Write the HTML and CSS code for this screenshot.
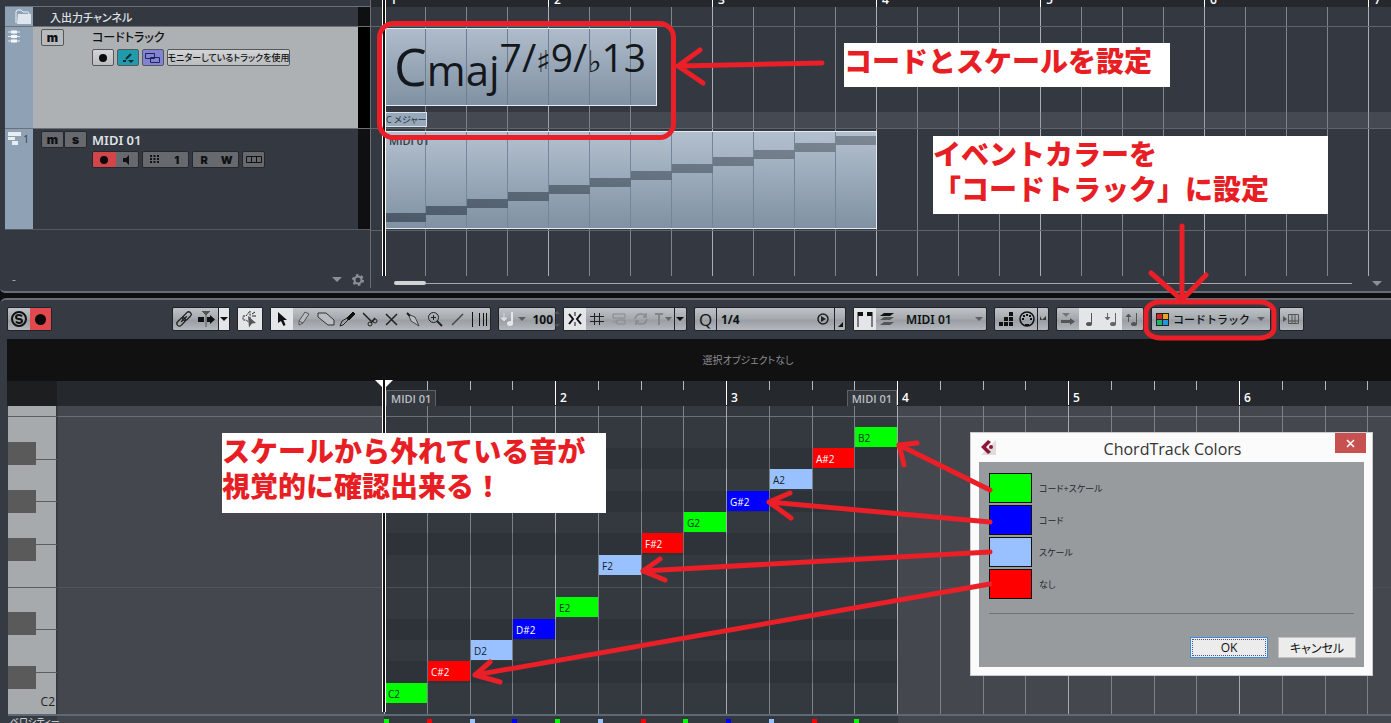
FILE: index.html
```html
<!DOCTYPE html>
<html lang="ja">
<head>
    <meta charset="UTF-8">
    <meta name="viewport" content="width=device-width, initial-scale=1.0">
    <title>ChordTrack Colors</title>
    <link rel="stylesheet" href="styles.css">
</head>
<body>
<div class="app">

    <!-- project window -->
    <section class="project">
        <div class="tracks">
            <div class="track folder">
                <div class="strip"><svg width="18" height="16" viewBox="0 0 18 16"><path d="M2 14V3q0-2 2-2h3l2 2h5q1 0 1 2" fill="none" stroke="#eef2f6"/><path d="M3 15L4 5h13v10z" fill="#dfe5ec"/></svg></div>
                <h2 class="name">入出力チャンネル</h2>
                <div class="meter"></div>
            </div>
            <div class="track chord">
                <div class="strip"><svg width="12" height="13" viewBox="0 0 12 13"><path d="M0 2h12M0 6.500h12M0 11h12" stroke="#e4e9ef"/><path d="M6 0v13" stroke="#b8c3cf"/><path d="M3 2h6M3 6.500h6M3 11h6" stroke="#f4f7fa" stroke-width="3"/></svg></div>
                <div class="ms"><button class="lt">m</button></div>
                <div class="body">
                    <h2 class="name">コードトラック</h2>
                    <div class="ctl">
                        <button class="lt" aria-label="rec"><i class="dot"></i></button>
                        <button class="lt teal" aria-label="chord"><svg width="14" height="12" viewBox="0 0 14 12"><path d="M2 9h3M5 7l5-5" stroke="#062a30" stroke-width="2"/><path d="M7 8h6l-3 3z" fill="#062a30"/></svg></button>
                        <button class="lt violet" aria-label="lanes"><svg width="16" height="10" viewBox="0 0 16 10"><path d="M.5.5h9v5h-9zM5.500 4.500h9v5h-9z" fill="none" stroke="#22235c"/></svg></button>
                        <button class="lt monitor">モニターしているトラックを使用</button>
                    </div>
                </div>
                <div class="meter"></div>
            </div>
            <div class="track midi">
                <div class="strip"><svg width="14" height="14" viewBox="0 0 14 14"><path d="M0 0h13v4H0zM0 5h7v3H0zM4 9h6v4H4z" fill="#e8edf2"/></svg><span>1</span></div>
                <div class="ms"><button>m</button><button>s</button></div>
                <div class="body">
                    <h2 class="name">MIDI 01</h2>
                    <div class="ctl">
                        <div class="pair"><button class="red" aria-label="rec"><i class="dot"></i></button><button aria-label="monitor"><svg width="8" height="10" viewBox="0 0 8 10"><path d="M0 3h3l3-3v10L3 7H0z" fill="#111"/></svg></button></div>
                        <div class="pair"><button aria-label="channel"><svg width="9" height="9" viewBox="0 0 9 9"><path d="M1 0v9M4.500 0v9M8 0v9" stroke="#111" stroke-width="2" stroke-dasharray="2 1"/></svg></button><button>1</button></div>
                        <div class="pair"><button>R</button><button>W</button></div>
                        <button aria-label="lanes"><svg width="16" height="8" viewBox="0 0 16 8"><path d="M.5.5h15v6h-15zM5.500 0v7M10.500 0v7" fill="none" stroke="#111"/></svg></button>
                    </div>
                </div>
                <div class="meter"></div>
            </div>
            <div class="foot">
                <span class="dash">-</span>
                <i class="tri"></i>
                <svg width="12" height="12" viewBox="0 0 12 12"><circle cx="6" cy="6" r="3.500" fill="none" stroke="#8b9098" stroke-width="2"/><circle cx="6" cy="6" r="5" fill="none" stroke="#8b9098" stroke-width="2" stroke-dasharray="2.600 2.600"/></svg>
            </div>
        </div>

        <div class="arrange">
            <div class="bar-nums"><span>1</span><span>2</span><span>3</span><span>4</span><span>5</span><span>6</span><span>7</span></div>
            <div class="lanes">
                <div class="lane top"></div>
                <div class="lane chords">
                    <div class="chord-event">C<small>maj</small><sup>7/<b>♯</b>9/<b>♭</b>13</sup></div>
                    <div class="scale-lane"><span>C メジャー</span></div>
                </div>
                <div class="lane part-lane">
                    <div class="midi-part">
                        <span>MIDI 01</span>
                        <svg width="490" height="96" viewBox="0 0 490 96">
                            <defs><linearGradient id="ev" x1="0" x2="1" y1="1" y2="0"><stop offset="0" stop-color="#4a5968"/><stop offset="1" stop-color="#7c8793"/></linearGradient></defs>
                            <path fill="url(#ev)" d="M0 81h40v9H0zM40 74h41v9H40zM81 67h41v9H81zM122 60h41v9h-41zM163 53h41v9h-41zM204 46h41v9h-41zM245 39h41v9h-41zM286 32h41v9h-41zM327 25h41v9h-41zM368 18h41v9h-41zM409 11h41v9h-41zM450 4h40v9h-40z"/>
                        </svg>
                    </div>
                </div>
                <div class="lane rest"></div>
            </div>
            <div class="scroll"><i class="thumb"></i><i class="rail"></i><i class="tri"></i></div>
            <i class="cursor"></i>
        </div>
    </section>

    <!-- key editor -->
    <section class="editor">
        <div class="toolbar">
            <div class="grp solo">
                <button aria-label="solo"><svg width="18" height="18" viewBox="0 0 18 18"><circle cx="9" cy="9" r="7" fill="none" stroke="#111" stroke-width="2"/><path d="M12 6.500q-1-1.500-3-1.500-3 0-3 2t3 2 3 2-3 2q-2 0-3-1.500" fill="none" stroke="#111" stroke-width="2"/></svg></button>
                <button class="red" aria-label="record"><i class="dot big"></i></button>
            </div>
            <div class="grp">
                <button aria-label="link"><svg width="18" height="18" viewBox="0 0 18 18" fill="none" stroke="#222" stroke-width="1.300"><g transform="rotate(-45 9 9)"><rect x="0" y="6.500" width="10" height="5" rx="2.500"/><rect x="8" y="6.500" width="10" height="5" rx="2.500"/><path d="M5 9h8"/></g></svg></button>
                <button class="follow" aria-label="autoscroll"><svg width="18" height="16" viewBox="0 0 18 16"><path d="M0 6h6v5H0zM9 6h3V4l5 4.500-5 4.500v-2H9z" fill="#111"/><path d="M8 3v13M4 0h8L8 4z" stroke="#555" fill="#555"/></svg></button>
                <button class="thin on" aria-label="menu"><i class="tri k"></i></button>
            </div>
            <div class="grp">
                <button class="on wide" aria-label="feedback"><svg width="16" height="18" viewBox="0 0 16 18"><path d="M1 6h3l4-5v12L4 10H1z" fill="none" stroke="#222" stroke-dasharray="2 1"/><path d="M10 4l3-2M10 6h4" stroke="#222"/><path d="M6 6l8 7-4 .5-3 4z" fill="#555"/></svg></button>
            </div>
            <div class="grp tools">
                <button class="on" aria-label="select"><svg width="12" height="16" viewBox="0 0 12 16"><path d="M2 1v11l3-2 2.500 5 2-1L7.500 9H11z" fill="#111"/></svg></button>
                <button aria-label="draw"><svg width="12" height="16" viewBox="0 0 12 16"><path d="M1 14V10L7 1l4 2-6 9zM1 10l4 2" fill="#b9bcc0" stroke="#555"/></svg></button>
                <button aria-label="erase"><svg width="18" height="14" viewBox="0 0 18 14"><path d="M1 1h8l8 7v5h-6L1 5z" fill="#b9bcc0" stroke="#333"/></svg></button>
                <button aria-label="trim"><svg width="17" height="16" viewBox="0 0 17 16"><path d="M1 15l2-5 5-3 1 2-5 5z" fill="none" stroke="#222"/><path d="M8 7l6-6 2 2-6 6z" fill="#111" stroke="#111"/></svg></button>
                <button aria-label="split"><svg width="16" height="15" viewBox="0 0 16 15" fill="none" stroke="#222"><path d="M1 1l9 9M9 11l4-5" stroke-width="1.500"/><circle cx="8" cy="12" r="2"/><circle cx="13" cy="9" r="2"/></svg></button>
                <button aria-label="mute"><svg width="13" height="13" viewBox="0 0 13 13"><path d="M1 1l11 11M12 1L1 12" stroke="#222" stroke-width="1.500"/></svg></button>
                <button aria-label="glue"><svg width="14" height="15" viewBox="0 0 14 15"><path d="M1 1l3 2 5 2 4 9-8-5-2-5z" fill="#b9bcc0" stroke="#444"/><path d="M1 1l3 3" stroke="#222" stroke-width="2"/></svg></button>
                <button aria-label="zoom"><svg width="16" height="16" viewBox="0 0 16 16" fill="none" stroke="#222"><circle cx="6.500" cy="6.500" r="5"/><path d="M4 6.500h5M6.500 4v5"/><path d="M10 10l5 5" stroke-width="2"/></svg></button>
                <button aria-label="line"><svg width="13" height="13" viewBox="0 0 13 13"><path d="M1 12L12 1" stroke="#444" stroke-width="1.500"/></svg></button>
                <button aria-label="warp"><svg width="17" height="15" viewBox="0 0 17 15"><path d="M1.500 0v15M8.500 1v13M12.500 1v13M15.500 1v13" stroke="#111"/></svg></button>
            </div>
            <div class="grp vel">
                <svg width="15" height="16" viewBox="0 0 15 16"><path d="M4 2v6M1 7h6L4 10z" fill="#d9dde1" stroke="#d9dde1"/><path d="M12 1v11" stroke="#e3e6ea" stroke-width="2"/><ellipse cx="10" cy="12.500" rx="3" ry="2.500" fill="#e3e6ea"/></svg>
                <i class="tri g"></i>
                <label class="hid" for="vel">ベロシティー</label><input id="vel" type="text" value="100">
                <svg width="6" height="16" viewBox="0 0 6 16"><path d="M0 3l3-3 3 3zM0 13l3 3 3-3z" fill="#555"/></svg>
            </div>
            <div class="grp snap">
                <button class="on" aria-label="snap"><svg width="14" height="14" viewBox="0 0 14 14" fill="none" stroke="#111"><path d="M1 2l4 5-4 5M13 2L9 7l4 5" stroke-width="2"/><path d="M7 0v4M7 10v4"/></svg></button>
                <button aria-label="grid"><svg width="14" height="12" viewBox="0 0 14 12"><path d="M4.500 0v12M9.500 0v12M0 3.500h14M0 8.500h14" stroke="#222"/></svg></button>
                <button aria-label="relative"><svg width="14" height="12" viewBox="0 0 14 12"><path d="M1 1h12v4H1zM5 7h8v4H5zM1 9h4" fill="none" stroke="#868b90"/></svg></button>
                <button aria-label="cycle"><svg width="14" height="12" viewBox="0 0 14 12"><path d="M1 6q1-5 6-5 3 0 5 2M13 6q-1 5-6 5-3 0-5-2M12 0v4H9M2 12V8h3" fill="none" stroke="#868b90" stroke-width="1.500"/></svg></button>
                <button aria-label="snap type"><svg width="18" height="12" viewBox="0 0 18 12"><path d="M1 1h8M5 1v11" stroke="#82878c" stroke-width="2"/><path d="M11 4h7l-3.500 4z" fill="#666"/></svg></button>
                <button class="thin" aria-label="menu"><i class="tri k"></i></button>
            </div>
            <div class="grp quant">
                <button class="q">Q</button>
                <label class="hid" for="quant">クオンタイズ</label>
                <select id="quant"><option>1/4</option></select>
                <svg width="14" height="14" viewBox="0 0 14 14"><circle cx="7" cy="7" r="5" fill="none" stroke="#222" stroke-width="1.500"/><path d="M5 4l5 3-5 3z" fill="#222"/></svg>
                <button class="thin end" aria-label="panel"><svg width="5" height="5" viewBox="0 0 5 5"><path d="M5 0v5H0z" fill="#111"/></svg></button>
            </div>
            <div class="grp part">
                <button class="on" aria-label="parts"><svg width="16" height="15" viewBox="0 0 16 15"><path d="M1 0v15M15 0v15" stroke="#111"/><path d="M1 0h5v4H1zM10 0h5v4h-5z" fill="#111"/></svg></button>
                <svg width="14" height="14" viewBox="0 0 14 14"><path d="M4 1h10l-4 3H0z" fill="#111"/><path d="M4 5h10l-4 3H0zM4 10h10l-4 3H0z" fill="#555"/></svg>
                <label class="hid" for="part">パート</label>
                <select id="part"><option>MIDI 01</option></select>
                <i class="tri g"></i>
            </div>
            <div class="grp step">
                <button aria-label="step input"><svg width="14" height="14" viewBox="0 0 14 14"><path d="M0 10h4v4H0zM5 10h4v4H5zM10 10h4v4h-4zM5 5h4v4H5zM10 5h4v4h-4zM10 0h4v4h-4z" fill="#111"/></svg></button>
                <button aria-label="midi input"><svg width="16" height="16" viewBox="0 0 16 16"><circle cx="8" cy="8" r="7" fill="none" stroke="#111" stroke-width="1.500"/><path d="M3 8h2M11 8h2M4 5h2M10 5h2M7 4h2M6 14h4" stroke="#111" stroke-width="2"/></svg></button>
                <button class="thin" aria-label="more"><svg width="6" height="6" viewBox="0 0 6 6"><path d="M0 0v4h2zM6 0L2 4h4z" fill="#333"/></svg></button>
            </div>
            <div class="grp edit">
                <button aria-label="move"><svg width="16" height="14" viewBox="0 0 16 14"><path d="M2 1h8L6 5z" fill="#777"/><path d="M1 8h9V6l5 3.500-5 3.500v-2H1z" fill="#555"/></svg></button>
                <button class="on" aria-label="pitch"><svg width="8" height="15" viewBox="0 0 8 15"><path d="M6.500 1v11" stroke="#555"/><ellipse cx="4" cy="12" rx="3" ry="2" fill="#555"/></svg></button>
                <button class="on" aria-label="down"><svg width="14" height="15" viewBox="0 0 14 15"><path d="M11.500 1v11M3.500 1v6M1 5l2.500 3L6 5" stroke="#666" fill="#666"/><ellipse cx="9" cy="12" rx="3" ry="2" fill="#666"/></svg></button>
                <button aria-label="up"><svg width="14" height="15" viewBox="0 0 14 15"><path d="M11.500 1v11M3.500 10V4M1 5l2.500-3L6 5" stroke="#555" fill="#555"/><ellipse cx="9" cy="12" rx="3" ry="2" fill="#555"/></svg></button>
            </div>
            <div class="grp color">
                <svg width="13" height="13" viewBox="0 0 13 13"><path d="M0 0h13v13H0z" fill="#222"/><path d="M1 1h5v5H1z" fill="#d8232a"/><path d="M7 1h5v5H7z" fill="#e8a21c"/><path d="M1 7h5v5H1z" fill="#18b56a"/><path d="M7 7h5v5H7z" fill="#2196e8"/></svg>
                <label class="hid" for="color">イベントカラー</label>
                <select id="color"><option>コードトラック</option></select>
                <i class="tri g"></i>
            </div>
            <div class="grp last">
                <button aria-label="keys"><svg width="16" height="10" viewBox="0 0 16 10"><path d="M0 2l4 3-4 3z" fill="#555"/><path d="M5.500.5h10v9h-10zM9 0v10M12 0v10M5 7h11" fill="none" stroke="#555"/></svg></button>
            </div>
        </div>

        <div class="info">選択オブジェクトなし</div>

        <div class="ruler">
            <div class="corner"></div>
            <div class="pre"></div>
            <div class="bars">
                <div class="bar"><span class="tag">MIDI 01</span></div>
                <div class="bar"><span>2</span></div>
                <div class="bar"><span>3</span><span class="tag end">MIDI 01</span></div>
                <div class="bar"><span>4</span></div>
                <div class="bar"><span>5</span></div>
                <div class="bar"><span>6</span></div>
            </div>
        </div>

        <div class="roll">
            <div class="keys">
                <svg width="49" height="308" viewBox="0 0 49 308">
                    <path d="M0 10.500h49M28 53.500h21M28 95.500h21M28 138.500h21M0 181.500h49M28 223.500h21M28 266.500h21" stroke="#5b5e61"/>
                    <path d="M0 36h28v23H0zM0 84h28v23H0zM0 132h28v23H0zM0 206h28v23H0zM0 260h28v23H0z" fill="#5a5a5a"/>
                </svg>
                <span>C2</span>
            </div>
            <div class="pre"></div>
            <div class="grid">
                <div class="notes">
                    <i class="dark r2"></i><i class="dark r4"></i><i class="dark r6"></i><i class="dark r10"></i><i class="dark r12"></i>
                    <span class="note both r13 c1">C2</span>
                    <span class="note none r12 c2">C#2</span>
                    <span class="note scale r11 c3">D2</span>
                    <span class="note chd r10 c4">D#2</span>
                    <span class="note both r9 c5">E2</span>
                    <span class="note scale r7 c6">F2</span>
                    <span class="note none r6 c7">F#2</span>
                    <span class="note both r5 c8">G2</span>
                    <span class="note chd r4 c9">G#2</span>
                    <span class="note scale r3 c10">A2</span>
                    <span class="note none r2 c11">A#2</span>
                    <span class="note both r1 c12">B2</span>
                </div>
            </div>
        </div>

        <div class="velocity">
            <span class="vlabel">ベロシティー</span>
            <div class="vbars">
                <i class="both"></i><i class="none"></i><i class="scale"></i><i class="chd"></i><i class="both"></i><i class="scale"></i><i class="none"></i><i class="both"></i><i class="chd"></i><i class="scale"></i><i class="none"></i><i class="both"></i>
            </div>
        </div>

        <svg class="flag" width="18" height="8" viewBox="0 0 18 8"><path d="M0 0h8v8zM10 0h8l-8 8z" fill="#fff"/></svg>
        <i class="cursor low"></i>
    </section>

    <!-- colour dialog -->
    <div class="dialog" role="dialog" aria-labelledby="dlg">
        <header>
            <svg width="15" height="15" viewBox="0 0 15 15"><path d="M0 15L15 0v15z" fill="#e0dcdc"/><path d="M7 0l3 2-5 5 5 5-3 2-7-7z" fill="#8e1638"/><circle cx="10" cy="7" r="2" fill="#8e1638"/></svg>
            <h1 id="dlg">ChordTrack Colors</h1>
            <button class="close" aria-label="close"><svg width="9" height="9" viewBox="0 0 9 9"><path d="M1 1l7 7M8 1L1 8" stroke="#fff" stroke-width="1.500"/></svg></button>
        </header>
        <div class="content">
            <ul>
                <li><button id="k1" class="both"></button><label for="k1">コード+スケール</label></li>
                <li><button id="k2" class="chd"></button><label for="k2">コード</label></li>
                <li><button id="k3" class="scale"></button><label for="k3">スケール</label></li>
                <li><button id="k4" class="none"></button><label for="k4">なし</label></li>
            </ul>
            <hr>
            <div class="actions"><button class="ok">OK</button><button>キャンセル</button></div>
        </div>
    </div>

    <!-- notes drawn over the windows -->
    <p class="memo m1">コードとスケールを設定</p>
    <p class="memo m2">イベントカラーを<br>「コードトラック」に設定</p>
    <p class="memo m3">スケールから外れている音が<br>視覚的に確認出来る！</p>
    <svg class="marks" width="1391" height="723" viewBox="0 0 1391 723">
        <rect x="379.500" y="23.500" width="294" height="114" rx="14"/>
        <rect x="1146" y="302" width="128" height="36" rx="14" ry="10"/>
        <path d="M822 63L678 66M700 50L678 66L703 83"/>
        <path d="M1182 226V299M1151 273L1182 300L1206 275"/>
        <path d="M990 490L899 445M917 443L899 445L904 465"/>
        <path d="M990 522L769 502M790 493L769 502L791 518"/>
        <path d="M990 552L643 571M660 559L643 571L665 580"/>
        <path d="M990 584L475 675M490 662L475 675L500 682"/>
    </svg>
</div>
</body>
</html>
```

FILE: styles.css
```css
*{ box-sizing: border-box;}
body{ margin: 0; background: #0d0e11; font-family: "Open Sans", "Noto Sans CJK JP", sans-serif; font-size: 12px; overflow: hidden;}
h1,h2,p,ul{ margin: 0; padding: 0; font-weight: normal; list-style: none;}
button,select,input{ margin: 0; padding: 0; border: 0; border-radius: 0; background: none; font: inherit; color: #111; appearance: none;}
button{ display: flex; align-items: center; justify-content: center;}
svg{ display: block; flex: none;}
:lang(ja){ font-feature-settings: "palt";}
.hid{ position: absolute; width: 1px; height: 1px; overflow: hidden; clip-path: inset(50%);}
.app{ position: relative; display: flex; flex-direction: column; gap: 5px; min-height: 100vh;}

.tri{ width: 0; height: 0; border: 5px solid transparent; border-top-color: #8b9098; border-bottom: 0;}
.tri.k{ border-width: 4px 4px 0; border-top-color: #111;}
.tri.g{ border-width: 4px 4px 0; border-top-color: #5c6065;}
.dot{ width: 8px; height: 8px; border-radius: 50%; background: #0b0b0b;}
.dot.big{ width: 11px; height: 11px;}
.both{ background: #00ff00; color: #032;}
.chd{ background: #0000ff; color: #fff;}
.scale{ background: #99c1ff; color: #123;}
.none{ background: #ff0000; color: #fff;}

/* project window */
.project{ display: flex; height: 293px; background: #343840; border-bottom: 2px solid #696d72; border-radius: 0 0 0 5px;}
.tracks{ flex: none; width: 371px; height: 288px; padding: 6px 0 0 5px; border-right: 1px solid #6a6e74; display: flex; flex-direction: column;}
.track{ display: flex; border-top: 1px solid #6c7178;}
.strip{ flex: none; width: 28px; background: #8fa1b4; display: flex; justify-content: space-between; align-items: flex-start; padding: 3px 4px 0 3px; font-size: 10px; line-height: 14px; color: #333b44;}
.name{ font-size: 13px; line-height: 18px; color: #dfe2e5;}
.meter{ width: 12px; margin-left: auto; background: #0f1011;}
.folder{ height: 20px;}
.folder .strip{ padding: 2px 0 0 9px;}
.folder .name{ padding: 2px 0 0 17px; font-size: 11px; font-weight: 500;}
.chord{ height: 102px;}
.chord > .body, .chord > .ms{ background: #adb1b3;}
.chord .name{ color: #111; font-size: 12px; font-weight: 500;}
.chord .meter{ background: #000;}
.midi{ height: 102px; border-bottom: 1px solid #555a60;}
.midi .name{ font-family: "Noto Sans", sans-serif; font-size: 13px; font-weight: 600;}
.ms{ width: 58px; padding: 2px 0 0 8px; display: flex; align-items: flex-start;}
.body{ flex: 1; padding: 2px 0 0 1px;}
.ms button, .ctl button{ width: 23px; height: 17px; border: 1px solid #26282b; border-radius: 2px; background: #666a6f; font: 900 12px/12px "Inter", sans-serif;}
.ms button.lt{ background: #b8bbbd; border-color: #55585b;}
.ctl{ display: flex; gap: 3px; margin-top: 2px;}
.ctl button.lt{ width: 22px; background: linear-gradient(#d2d4d6,#babdbf); border-color: #55585b;}
.ctl button.teal{ background: #219bab;}
.ctl button.violet{ background: #8084d2;}
.ctl button.monitor{ width: 123px; font: 500 9px/14px "Noto Sans CJK JP", sans-serif; font-feature-settings: "palt"; white-space: nowrap;}
.pair{ display: flex; width: 47px; height: 17px; border: 1px solid #26282b; border-radius: 2px; background: #666a6f;}
.pair button{ flex: 1; height: 15px; border: 0; background: none; font-size: 11px;}
.ctl .pair .red{ background: #d4454b;}
.foot{ display: flex; align-items: center; gap: 10px; margin-top: auto; padding: 0 6px 0 7px; color: #a5a9ae;}
.dash{ margin-right: auto;}

.arrange{ position: relative; flex: 1; min-width: 0; padding-left: 13px; overflow: hidden;}
.bar-nums{ display: flex; height: 7px; margin-left: -13px; padding-left: 13px; background: #25282d; overflow: hidden;}
.bar-nums span{ flex: none; width: 164px; height: 7px; border-left: 1px solid #fff; padding-left: 5px; color: #fff; font-size: 12px; font-weight: 600; line-height: 14px; display: flex; align-items: flex-end;}
.lanes{ height: 269px; background-image: linear-gradient(to right, #a9adb1 1px, transparent 1px), linear-gradient(to right, #80858a 1px, transparent 1px); background-size: 164px 100%, 41px 100%;}
.lane{ border-bottom: 1px solid #5f6469; margin-left: -13px; padding-left: 14px;}
.top{ height: 20px;}
.chords{ height: 102px; padding-top: 1px;}
.chord-event{ display: flow-root; width: 272px; height: 78px; padding-left: 8px; border: 1px solid #e4ebf2; font: 52px/74px "Open Sans", "Noto Sans CJK JP", sans-serif; color: #14181c; white-space: nowrap;
    background: repeating-linear-gradient(to right, transparent 0, transparent 39px, #6d7e90 39px, #6d7e90 40px, transparent 40px, transparent 41px), linear-gradient(#afbccb,#8091a3);}
.chord-event small{ font-size: 42px;}
.chord-event sup{ font-size: 39px; line-height: 0; vertical-align: 14px;}
.chord-event b{ font: 30px/0 "DejaVu Sans", sans-serif;}
.scale-lane{ height: 16px; margin: 6px 0 0 -1px; padding-left: 1px; background: rgba(120,125,130,.25);}
.scale-lane span{ display: block; width: 42px; height: 15px; border: 1px solid #d5e2ee; background: #97a8bb; font-size: 9px; line-height: 13px; color: #2b323a; white-space: nowrap;}
.part-lane{ height: 102px; padding-top: 2px;}
.midi-part{ display: grid; width: 492px; height: 98px; border: 1px solid #e4ebf2;
    background: repeating-linear-gradient(to right, transparent 0, transparent 39px, #74869a 39px, #74869a 40px, transparent 40px, transparent 41px), linear-gradient(#b3c0cf,#7f91a2);}
.midi-part > *{ grid-area: 1 / 1;}
.midi-part span{ padding-left: 3px; font-size: 11px; font-weight: 600; line-height: 18px; color: #353b42;}
.rest{ border: 0;}
.scroll{ display: flex; align-items: center; height: 14px; padding-right: 9px; margin-left: 10px;}
.thumb{ width: 32px; height: 4px; border-radius: 2px; background: #d0d2d4;}
.rail{ flex: 1; height: 1px; background: #a5a8ac; margin-right: 20px;}
.cursor{ position: absolute; top: 0; left: 11px; width: 4px; height: 276px; border: solid #fff; border-width: 0 1px; background: #111;}

/* key editor */
.editor{ position: relative; flex: 1; display: flex; flex-direction: column; background: #363b43; border-top: 2px solid #696d72; border-radius: 6px 0 0 0; overflow: hidden;}
.toolbar{ display: flex; gap: 7px; padding: 7px 7px 8px;}
.grp{ flex: none; display: flex; align-items: center; height: 24px; border: 1px solid #202327; border-radius: 2px; background: linear-gradient(#bfc3c7,#a4a9ae 50%,#999ea4 55%,#b4b8bd);}
.grp button{ width: 22px; height: 22px;}
.grp .on{ background: #e3e5e8;}
.grp .wide{ width: 24px;}
.grp .follow{ width: 23px;}
.grp .thin{ width: 11px; border-left: 1px solid #202327;}
.grp select, .grp input{ height: 22px; font: 700 12px "Noto Sans", "Noto Sans CJK JP", sans-serif;}
.solo{ width: 45px; margin-right: 113px;}
.grp .red{ background: #e0494d;}
.tools{ width: 221px;}
.vel{ width: 58px; gap: 3px; padding-left: 1px;}
.grp input{ width: 24px; text-align: right;}
.vel svg:last-child{ margin-left: -2px;}
.snap{ width: 124px;}
.quant{ width: 152px;}
.quant .q{ font-size: 17px; border-right: 1px solid #202327;}
.quant select{ flex: 1; padding-left: 4px;}
.quant svg{ margin-right: 4px;}
.quant .end{ align-items: flex-end; padding-bottom: 3px;}
.quant .end svg{ margin: 0;}
.part{ width: 134px; padding-right: 3px;}
.part svg{ margin-left: 4px;}
.part .on svg{ margin: 0;}
.part select{ flex: 1; padding-left: 12px;}
.grp #part{ font-weight: 600;}
.step{ width: 55px;}
.edit{ width: 88px;}
.color{ width: 120px; padding: 0 5px 0 4px;}
.grp #color{ flex: 1; min-width: 0; padding-left: 4px; font-size: 11px; font-weight: 500;}
.last{ width: 25px; margin-left: 1px;}

.info{ height: 42px; margin-left: 7px; padding-left: 98px; background: #111; color: #8b8e92; font-size: 10px; line-height: 42px; text-align: center;}
.ruler{ display: flex; height: 25px; margin-left: 7px; background: #25282d;}
.corner{ flex: none; width: 50px; background: #1d1e1f;}
.pre{ flex: none; width: 327px;}
.bars{ flex: 1; min-width: 0; display: flex; overflow: hidden; background: linear-gradient(to right, transparent 43px, #b5b8bb 43px, #b5b8bb 44px, transparent 44px, transparent 86px, #b5b8bb 86px, #b5b8bb 87px, transparent 87px, transparent 128px, #b5b8bb 128px, #b5b8bb 129px, transparent 129px) 0 0 / 171px 9px repeat-x;}
.bar{ flex: none; width: 171px; height: 24px; padding-top: 9px; display: flex; border-left: 1px solid #fff; color: #fff; font-size: 12px; font-weight: 600; line-height: 15px;}
.bar span{ padding-left: 4px;}
.bar .tag{ height: 16px; padding: 0 4px; margin-left: 1px; background: #34383f; border: 1px solid #5e6369; border-bottom: 0; color: #bcbfc2; font-size: 11px;}
.bar .end{ margin-left: auto;}

.roll{ display: flex; flex: 1; margin-left: 8px; background: linear-gradient(transparent 10px, #6b7075 10px, #6b7075 11px, transparent 11px, transparent 181px, #50555a 181px, #50555a 182px, transparent 182px) #44484e;}
.keys{ flex: none; width: 49px; display: grid; background: #a6aaac; border-right: 1px solid #33373d;}
.keys > *{ grid-area: 1 / 1;}
.keys span{ align-self: end; justify-self: end; padding: 0 2px 4px; font-size: 12px; color: #222;}
.roll .pre{ border-left: 1px solid #3a3e44;}
.grid{ flex: 1; min-width: 0;}
.grid, .notes{ background-image: linear-gradient(to right, #a6aaae 1px, transparent 1px, transparent 43px, #7d8287 43px, #7d8287 44px, transparent 44px, transparent 86px, #7d8287 86px, #7d8287 87px, transparent 87px, transparent 128px, #7d8287 128px, #7d8287 129px, transparent 129px), linear-gradient(transparent 10px, #6b7075 10px, #6b7075 11px, transparent 11px, transparent 181px, #4b5055 181px, #4b5055 182px, transparent 182px); background-size: 171px 100%, 100% 100%;}
.notes{ width: 514px; height: 100%; padding-top: 21px; background-color: #34383f; display: grid; align-content: start;
    grid-template-columns: repeat(3, 43px 43px 42px 43px);
    grid-template-rows: 21px 21px 22px 21px 21px 22px 21px 21px 22px 21px 21px 22px 21px;}
.note{ height: 20px; margin-left: 1px; padding: 3px 0 0 3px; font-size: 10px; line-height: 16px;}
.dark{ grid-column: 1 / -1; background: rgba(20,22,28,.16);}
.r1{ grid-row: 1;} .r2{ grid-row: 2;} .r3{ grid-row: 3;} .r4{ grid-row: 4;} .r5{ grid-row: 5;} .r6{ grid-row: 6;} .r7{ grid-row: 7;}
.r9{ grid-row: 9;} .r10{ grid-row: 10;} .r11{ grid-row: 11;} .r12{ grid-row: 12;} .r13{ grid-row: 13;}
.c1{ grid-column: 1;} .c2{ grid-column: 2;} .c3{ grid-column: 3;} .c4{ grid-column: 4;} .c5{ grid-column: 5;} .c6{ grid-column: 6;}
.c7{ grid-column: 7;} .c8{ grid-column: 8;} .c9{ grid-column: 9;} .c10{ grid-column: 10;} .c11{ grid-column: 11;} .c12{ grid-column: 12;}
.velocity{ display: flex; height: 9px; margin-left: 8px; border-top: 2px solid #5d6974; overflow: hidden;}
.vlabel{ flex: none; width: 376px; padding-left: 2px; font-size: 9px; line-height: 12px; color: #e3e5e7; background: linear-gradient(to right, transparent 49px, #44484e 49px);}
.vbars{ flex: 1; display: grid; grid-template-columns: repeat(3, 43px 43px 42px 43px); padding-top: 3px; background: linear-gradient(to right, #34383f 514px, #44484e 514px);}
.vbars i{ width: 5px; height: 6px;}
.cursor.low{ top: 80px; bottom: 11px; left: 382px; height: auto;}
.flag{ position: absolute; top: 80px; left: 375px;}

/* dialog */
.dialog{ position: absolute; left: 970px; top: 432px; width: 403px; padding: 0 8px 8px; background: #fbfbfb; border: 1px solid #c9cbcd;}
.dialog header{ display: flex; align-items: flex-start; height: 29px; margin-right: -2px;}
.dialog header > svg{ margin: 7px 0 0 2px;}
.dialog h1{ flex: 1; padding-left: 14px; font-size: 16px; line-height: 32px; text-align: center; color: #333;}
.dialog .close{ width: 31px; height: 20px; background: #c75050;}
.content{ height: 205px; padding: 11px 10px 9px; background: #979b9e; display: flex; flex-direction: column;}
.content ul{ display: grid; gap: 2px;}
.content li{ display: flex; align-items: center; gap: 7px; font-size: 9px; color: #22272c;}
.content li button{ width: 43px; height: 30px; border: 1px solid #111;}
.content hr{ width: 100%; margin: 14px 0 0; border: 0; border-top: 1px solid #6f7478;}
.actions{ display: flex; justify-content: flex-end; gap: 10px; margin-top: auto; margin-right: -2px;}
.actions button{ width: 78px; height: 21px; border: 1px solid #c0c2c4; background: #ececec; font-size: 12px;}
.actions .ok{ border-color: #3b8ede; outline: 1px dotted #557; outline-offset: -3px;}

/* red notes */
.memo{ position: absolute; background: #fff; color: #e81e25; font: 900 28px/35px "Noto Sans CJK JP", sans-serif; font-feature-settings: normal; white-space: nowrap;}
.m1{ left: 844px; top: 43px; width: 326px; height: 44px;}
.m2{ left: 933px; top: 136px; width: 395px; height: 78px;}
.m3{ left: 222px; top: 433px; width: 384px; height: 80px;}
.marks{ position: absolute; left: 0; top: 0; fill: none; stroke: #ea1f27; stroke-width: 5; stroke-linecap: round; stroke-linejoin: round; pointer-events: none;}
```
